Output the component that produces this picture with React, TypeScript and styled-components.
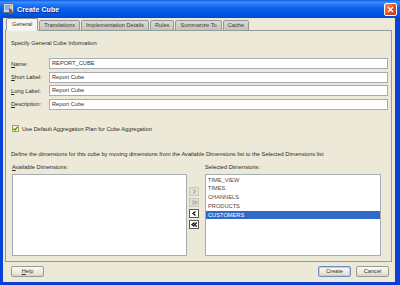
import React from 'react';
import styled, { createGlobalStyle } from 'styled-components';

const GlobalStyle = createGlobalStyle`
  html, body {
    margin: 0;
    padding: 0;
    background: #0a3fd0;
  }
  body {
    font-family: "Liberation Sans", Arial, sans-serif;
  }
`;

const Window = styled.div`
  width: 400px;
  height: 285px;
  display: flex;
  flex-direction: column;
  overflow: hidden;
`;

const TitleBar = styled.div`
  height: 18px;
  flex: none;
  display: flex;
  align-items: center;
  padding: 0 3px 0 3px;
  background: linear-gradient(
    to bottom,
    #0a5de8 0%,
    #3d8ffd 12%,
    #2a7bf6 22%,
    #0a61e8 45%,
    #0058e4 75%,
    #0048d6 100%
  );
`;

const TitleText = styled.span`
  color: #fff;
  font-weight: bold;
  font-size: 7px;
  margin-left: 2px;
  letter-spacing: 0.1px;
  text-shadow: 1px 1px 0 #0a2a88;
`;

const Spacer = styled.div`
  flex: 1;
`;

const CloseButton = styled.div`
  width: 11px;
  height: 11px;
  border: 1px solid #fff;
  border-radius: 2px;
  background: linear-gradient(135deg, #f08a6a 0%, #e0501e 55%, #c83a10 100%);
  display: flex;
  align-items: center;
  justify-content: center;
  margin-top: 1px;
`;

const Frame = styled.div`
  flex: 1;
  display: flex;
  flex-direction: column;
  background: #ece9d8;
  border-left: 3px solid #0842d6;
  border-right: 5px solid #0842d6;
  border-bottom: 3px solid #0a3fd0;
  color: #2a2a2a;
  font-size: 5.7px;
`;

const TabRow = styled.div`
  display: flex;
  align-items: flex-end;
  height: 13px;
  padding-left: 3px;
  margin-bottom: -1px;
  position: relative;
  z-index: 1;
`;

const Tab = styled.div<{ $active?: boolean }>`
  height: ${(p) => (p.$active ? 11 : 9)}px;
  line-height: ${(p) => (p.$active ? 11 : 9)}px;
  padding: 0 ${(p) => (p.$active ? 5 : 4)}px;
  margin-right: 1px;
  border: 1px solid #919b9c;
  border-bottom: ${(p) => (p.$active ? '1px solid #f6f5ef' : '1px solid #919b9c')};
  border-radius: 2px 2px 0 0;
  background: ${(p) =>
    p.$active ? '#f6f5ef' : 'linear-gradient(to bottom, #dcd9cf, #c6c3b8)'};
  color: ${(p) => (p.$active ? '#333' : '#3a3a3a')};
  white-space: nowrap;
`;

const Panel = styled.div`
  height: 230px;
  margin: 0 3px 0 2px;
  border: 1px solid #919b9c;
  display: flex;
  flex-direction: column;
  padding: 0 3px 0 5px;
  background: #ece9d8;
`;

const Line = styled.div<{ $top: number }>`
  height: 8px;
  line-height: 8px;
  margin-top: ${(p) => p.$top}px;
  white-space: nowrap;
`;

const FormGrid = styled.div`
  margin-top: 11px;
  display: grid;
  grid-template-columns: 38px 1fr;
  grid-auto-rows: 11px;
  row-gap: 2.6px;
  align-items: center;
`;

const Label = styled.span`
  white-space: nowrap;
`;

const Mn = styled.span`
  text-decoration: underline;
`;

const TextInput = styled.div`
  height: 11px;
  box-sizing: border-box;
  border: 1px solid #a5acb2;
  background: #fff;
  padding-left: 2px;
  line-height: 9px;
  color: #333;
`;

const CheckRow = styled.div`
  margin-top: 15px;
  height: 8px;
  display: flex;
  align-items: center;
  gap: 3px;
  padding-left: 1px;
`;

const CheckBox = styled.div`
  width: 7px;
  height: 7px;
  box-sizing: border-box;
  border: 1px solid #b49d52;
  background: #f6f1c8;
  display: flex;
  align-items: center;
  justify-content: center;
`;

const DimGrid = styled.div`
  margin-top: 5px;
  display: grid;
  grid-template-columns: 175px 18px 176px;
  grid-template-rows: 8px 82px;
  row-gap: 3px;
  padding-left: 1px;
  line-height: 8px;
`;

const ListBox = styled.div`
  background: #fff;
  border: 1px solid #a5acb2;
  box-sizing: border-box;
  padding-top: 1px;
`;

const ListItem = styled.div<{ $selected?: boolean }>`
  height: 8.7px;
  line-height: 8.7px;
  padding-left: 2px;
  background: ${(p) => (p.$selected ? '#316ac5' : 'transparent')};
  color: ${(p) => (p.$selected ? '#fff' : '#4a4a4a')};
`;

const MoveColumn = styled.div`
  display: flex;
  flex-direction: column;
  gap: 2px;
  padding: 13px 0 0 2px;
`;

const MoveButton = styled.div<{ $enabled?: boolean }>`
  width: 10px;
  height: 9px;
  box-sizing: border-box;
  border: 1px solid ${(p) => (p.$enabled ? '#5a5a5a' : '#c9c6ba')};
  background: ${(p) => (p.$enabled ? '#fff' : '#e4e1d4')};
  display: flex;
  align-items: center;
  justify-content: center;
`;

const Footer = styled.div`
  flex: 1;
  display: flex;
  align-items: flex-start;
  padding: 4px 6px 0 8px;
  gap: 5px;
`;

const Button = styled.div<{ $default?: boolean }>`
  width: 33px;
  height: 11px;
  box-sizing: border-box;
  border: 1px solid ${(p) => (p.$default ? '#6f8fb8' : '#9a9a8e')};
  border-radius: 2px;
  background: linear-gradient(to bottom, #fbfbf8, #e8e6dc 70%, #d6d2c4);
  box-shadow: ${(p) => (p.$default ? 'inset 0 0 0 1px #b8cde8' : 'none')};
  text-align: center;
  line-height: 9px;
  color: #333;
`;

const Chevron = ({ dir, double, color }: { dir: 'l' | 'r'; double?: boolean; color: string }) => {
  const one = dir === 'r' ? 'M2 1.5 L4.5 3.5 L2 5.5' : 'M4.5 1.5 L2 3.5 L4.5 5.5';
  const two = dir === 'r' ? 'M4.5 1.5 L7 3.5 L4.5 5.5' : 'M7 1.5 L4.5 3.5 L7 5.5';
  return (
    <svg width="8" height="7" viewBox="0 0 8 7">
      <path d={double ? one : dir === 'r' ? 'M3 1.5 L5.5 3.5 L3 5.5' : 'M5.5 1.5 L3 3.5 L5.5 5.5'} fill="none" stroke={color} strokeWidth="1.3" />
      {double && <path d={two} fill="none" stroke={color} strokeWidth="1.3" />}
    </svg>
  );
};

const tabs = ['General', 'Translations', 'Implementation Details', 'Rules', 'Summarize To', 'Cache'];
const selected = ['TIME_VIEW', 'TIMES', 'CHANNELS', 'PRODUCTS', 'CUSTOMERS'];

export default function App() {
  return (
    <>
      <GlobalStyle />
      <Window>
        <TitleBar>
          <svg width="12" height="12" viewBox="0 0 12 12">
            <rect x="0.5" y="0.5" width="10" height="9" fill="#cfd6de" stroke="#5b6e86" />
            <rect x="2" y="2" width="7" height="5" fill="#7fb0e0" />
            <path d="M6 5 L9 7 L10 11 L6 11 Z" fill="#8a5a3a" />
            <circle cx="8" cy="4.5" r="1.3" fill="#e8c9a0" />
          </svg>
          <TitleText>Create Cube</TitleText>
          <Spacer />
          <CloseButton>
            <svg width="7" height="7" viewBox="0 0 7 7">
              <path d="M1 1 L6 6 M6 1 L1 6" stroke="#fff" strokeWidth="1.4" />
            </svg>
          </CloseButton>
        </TitleBar>
        <Frame>
          <TabRow>
            {tabs.map((t, i) => (
              <Tab key={t} $active={i === 0}>
                {t}
              </Tab>
            ))}
          </TabRow>
          <Panel>
            <Line $top={8}>Specify General Cube Information</Line>
            <FormGrid>
              <Label><Mn>N</Mn>ame:</Label>
              <TextInput>REPORT_CUBE</TextInput>
              <Label><Mn>S</Mn>hort Label:</Label>
              <TextInput>Report Cube</TextInput>
              <Label><Mn>L</Mn>ong Label:</Label>
              <TextInput>Report Cube</TextInput>
              <Label><Mn>D</Mn>escription:</Label>
              <TextInput>Report Cube</TextInput>
            </FormGrid>
            <CheckRow>
              <CheckBox>
                <svg width="5" height="5" viewBox="0 0 5 5">
                  <path d="M0.5 2.5 L2 4 L4.5 0.8" fill="none" stroke="#21a121" strokeWidth="1.2" />
                </svg>
              </CheckBox>
              <span>Use Default Aggregation Plan for Cube Aggregation</span>
            </CheckRow>
            <Line $top={17}>
              Define the dimensions for this cube by moving dimensions from the Available Dimensions list to the Selected Dimensions list
            </Line>
            <DimGrid>
              <Label><Mn>A</Mn>vailable Dimensions:</Label>
              <span />
              <Label>Selected Dimensions:</Label>
              <ListBox />
              <MoveColumn>
                <MoveButton><Chevron dir="r" color="#b5b2a6" /></MoveButton>
                <MoveButton><Chevron dir="r" double color="#b5b2a6" /></MoveButton>
                <MoveButton $enabled><Chevron dir="l" color="#111" /></MoveButton>
                <MoveButton $enabled><Chevron dir="l" double color="#111" /></MoveButton>
              </MoveColumn>
              <ListBox>
                {selected.map((s) => (
                  <ListItem key={s} $selected={s === 'CUSTOMERS'}>
                    {s}
                  </ListItem>
                ))}
              </ListBox>
            </DimGrid>
          </Panel>
          <Footer>
            <Button><Mn>H</Mn>elp</Button>
            <Spacer />
            <Button $default>Create</Button>
            <Button>Cancel</Button>
          </Footer>
        </Frame>
      </Window>
    </>
  );
}
